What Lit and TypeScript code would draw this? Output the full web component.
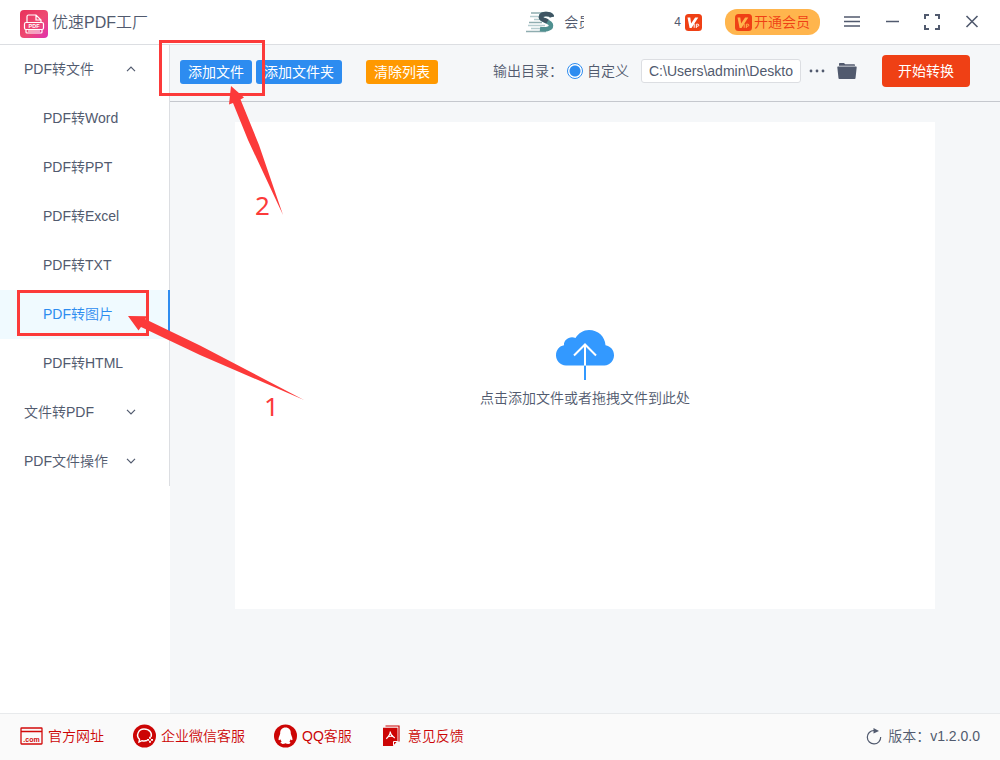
import { LitElement, html, css, svg, nothing } from "lit";
import { customElement, state } from "lit/decorators.js";

interface MenuGroup {
  title: string;
  items: string[];
}

const GROUPS: MenuGroup[] = [
  {
    title: "PDF转文件",
    items: ["PDF转Word", "PDF转PPT", "PDF转Excel", "PDF转TXT", "PDF转图片", "PDF转HTML"],
  },
  { title: "文件转PDF", items: [] },
  { title: "PDF文件操作", items: [] },
];

const logoIcon = html`<svg class="logo" width="28" height="28" viewBox="0 0 28 28" aria-hidden="true">
  <defs>
    <linearGradient id="lg" x1="0" y1="0" x2="1" y2="1">
      <stop offset="0" stop-color="#e8315a" />
      <stop offset="0.55" stop-color="#ee4a72" />
      <stop offset="1" stop-color="#e02fb0" />
    </linearGradient>
  </defs>
  <rect width="28" height="28" rx="4" fill="url(#lg)" />
  <path d="M7 12V6.500q0-1.500 1.500-1.500H16l5 5v2M16 5v5h5M6 19.500V22q0 1 1 1h14q1 0 1-1v-2.500M8 21h12" fill="none" stroke="#fff" stroke-width="1.200" />
  <rect x="4.500" y="12.500" width="19" height="7" rx="1.500" fill="none" stroke="#fff" stroke-width="1.200" />
  <text x="14" y="18.200" text-anchor="middle" font-size="5.500" font-weight="700" font-family="Liberation Sans, sans-serif" fill="#fff">PDF</text>
</svg>`;

const avatarIcon = html`<svg width="28" height="24" viewBox="0 0 28 24" aria-hidden="true">
  <path d="M5 3h12M3 12.500h13M0 21.500h20" stroke="#8fadb0" stroke-width="1.600" fill="none" />
  <path d="M4 6.500h10M8 9.500h7M2 15.500h17M5 18.500h12" stroke="#b5cccf" stroke-width="1.400" fill="none" />
  <path d="M26 7c-1-4-11.500-4.500-11 .5.300 3.500 10 3.500 10 8 0 4-6 4-11 3.500" fill="none" stroke="#4f9090" stroke-width="4.500" />
  <path d="M26 7c-1-4-11.500-4.500-11 .5.200 2 4 2.500 6.500 4" fill="none" stroke="#3f5563" stroke-width="4.500" />
</svg>`;

const vipIcon = (ink: string) => html`<svg width="17" height="17" viewBox="0 0 17 17" aria-hidden="true">
  <rect width="17" height="17" rx="3.500" fill="#ef4015" />
  <path d="M2.500 3.500h2.800l.8 6 4-6h3.200L6.500 14H4.600z" fill=${ink} />
  <path d="M9.200 9.700v4.100M11.300 14v-3.800h1.500q1 0 1 1t-1 1h-1.500" fill="none" stroke=${ink} stroke-width="1" />
</svg>`;

const chevron = (open: boolean) => html`<svg width="10" height="6" viewBox="0 0 10 6" aria-hidden="true">
  <path d=${open ? "M1 5.200l4-4 4 4" : "M1 .8l4 4 4-4"} fill="none" stroke="#515a6e" stroke-width="1.200" />
</svg>`;

const winIcon = (d: string, w = 2) => html`<svg width="16" height="16" viewBox="0 0 16 16" aria-hidden="true">
  <path d=${d} fill="none" stroke="#515a6e" stroke-width=${w} />
</svg>`;

const dotsIcon = html`<svg width="16" height="4" viewBox="0 0 16 4" aria-hidden="true" fill="#515a6e">
  <circle cx="2" cy="2" r="1.400" /><circle cx="8" cy="2" r="1.400" /><circle cx="14" cy="2" r="1.400" />
</svg>`;

const folderIcon = html`<svg width="20" height="18" viewBox="0 0 20 18" aria-hidden="true" fill="#515a6e">
  <path d="M2 3V1.800Q2 1 2.800 1H7l1.200 1.200h9q.8 0 .8.800v.8H2z" />
  <path d="M1 4.500h18q.8 0 .7.800l-1.200 10.900q-.1.800-.9.800H2.400q-.8 0-.9-.8L.3 5.300q-.1-.8.700-.8z" />
</svg>`;

const cloudIcon = html`<svg width="58" height="50" viewBox="0 0 58 50" aria-hidden="true">
  <path d="M10 35.500C4 35 0 30.500 0 25.200 0 20 3.500 15.800 8 15.200 7.500 10 13.500 5.500 19.500 8 22.500 3 27.500 0 33 0c9 0 16 6.500 16.500 15.200C54.500 16 58 20 58 25.200c0 5.500-4 9.800-9.500 10.300z" fill="#3399ff" />
  <path d="M29 35.500V50" stroke="#3399ff" stroke-width="2" />
  <path d="M29 35.500V15M18 25.500L29 14.500l11 11" fill="none" stroke="#fff" stroke-width="2" />
</svg>`;

const siteIcon = html`<svg width="23" height="18" viewBox="0 0 23 18" aria-hidden="true">
  <path d="M1.500 1h20q.5 0 .5.500v15q0 .5-.5.500h-20q-.5 0-.5-.5v-15q0-.5.500-.5zM1 4.500h21" fill="none" stroke="#d20a0a" stroke-width="1.300" />
  <text x="11.500" y="14.500" text-anchor="middle" font-size="7" font-weight="700" font-family="Liberation Sans, sans-serif" fill="#d20a0a">.com</text>
</svg>`;

const wechatIcon = html`<svg width="23" height="24" viewBox="0 0 23 24" aria-hidden="true">
  <circle cx="11.500" cy="12" r="11.500" fill="#cc0505" />
  <path d="M14 16.500q-2.500.8-5 .2L6 18l.5-2.700C2.500 11.500 5.500 5 11 5s8.500 4 7 8" fill="none" stroke="#fff" stroke-width="1.400" />
  <path d="M17 12.800v2M17 16.800v2M14 15.800h2M18 15.800h2" stroke="#fff" stroke-width="1.800" />
</svg>`;

const qqIcon = html`<svg width="23" height="24" viewBox="0 0 23 24" aria-hidden="true">
  <circle cx="11.500" cy="12" r="11.500" fill="#cc0505" />
  <path d="M11.500 3.500c-3.500 0-5.500 2.500-5.300 6-.2 1.500-1.700 3.500-1.700 6.300.4 1 1.300.2 1.800-.6.300 1 .8 1.800 1.400 2.400-1.800.7-1.400 2.400 1 2.400 1.200 0 2.200-.3 2.800-.8.600.5 1.600.8 2.800.8 2.400 0 2.800-1.700 1-2.400.600-.6 1.100-1.400 1.400-2.400.5.800 1.400 1.600 1.800.6 0-2.800-1.500-4.800-1.700-6.300.200-3.500-1.800-6-5.300-6z" fill="#fff" />
</svg>`;

const feedbackIcon = html`<svg width="19" height="22" viewBox="-2 0 19 22" aria-hidden="true">
  <path d="M2.500 1h13.500v15.500" fill="none" stroke="#cc0505" stroke-width="1.200" />
  <path d="M0 2.800h14.500v13.200l-4.700 5H0z" fill="#cc0505" />
  <path d="M10.500 20.500v-4h4" fill="none" stroke="#fff" stroke-width="1" />
  <path d="M7.300 6.500q0 3.500-4 7.300M7.300 6.500q0 3.500 4.500 6.500M4.500 12q3-1.300 6-.4" fill="none" stroke="#fff" stroke-width="1.200" />
</svg>`;

const refreshIcon = html`<svg width="16" height="17" viewBox="0 0 16 17" aria-hidden="true">
  <path d="M8 2.500A6.700 6.700 0 1 0 14.700 9" fill="none" stroke="#515a6e" stroke-width="1.200" />
  <path d="M7.500 0v5.600L13 3z" fill="#515a6e" />
</svg>`;

const marks = svg`
  <g fill="none" stroke="#fc3a3a" stroke-width="3">
    <rect x="160.500" y="41.500" width="103" height="53" />
    <rect x="18.500" y="291.500" width="129" height="43" />
  </g>
  <g fill="#fc3a3a">
    <path d="M231 86l13 11.500-3.500 2L259 145 283 215 248 140 233 103l-4 1.500z" />
    <path d="M128 316l18.500.3-1 3L200 345.500 304 400 200 355 141 327l-2.500 3.500z" />
    <text x="255" y="215" class="num">2</text>
    <text x="264" y="416" class="num">1</text>
  </g>`;

@customElement("app-root")
export class AppRoot extends LitElement {
  @state() private active = "PDF转图片";
  @state() private open = new Set([0]);

  static styles = css`
    :host {
      display: flex;
      flex-direction: column;
      position: relative;
      min-height: 100vh;
      overflow: hidden;
      background: #fff;
      color: #515a6e;
      font: 350 14px/20px "Liberation Sans", "Noto Sans CJK SC", sans-serif;
    }
    * { box-sizing: border-box; }
    svg { display: block; flex: none; }
    button {
      display: flex;
      align-items: center;
      justify-content: center;
      padding: 0;
      border: 0;
      background: none;
      color: inherit;
      font: inherit;
      white-space: nowrap;
      cursor: pointer;
    }
    .header {
      display: flex;
      align-items: center;
      height: 45px;
      padding: 0 8px 0 20px;
      border-bottom: 1px solid #dcdee2;
    }
    .logo { margin-top: 4px; }
    .title {
      margin: 0 auto 0 4px;
      padding-top: 2px;
      font-size: 16px;
      font-weight: inherit;
      line-height: 24px;
    }
    .user { display: flex; align-items: center; margin-right: 23px; }
    .name {
      width: 20px;
      margin: 0 90px 0 10px;
      overflow: hidden;
      white-space: nowrap;
    }
    .count { margin-right: 4px; font-size: 12px; }
    .pill {
      gap: 2px;
      height: 26px;
      margin-right: 12px;
      padding: 0 10px;
      border-radius: 12px;
      background: #ffb54d;
      color: #ef4015;
    }
    .win { width: 40px; height: 40px; }
    .body { display: flex; flex: 1; }
    .side { flex: none; width: 170px; }
    .menu { border-right: 1px solid #dcdee2; }
    .group, .item { width: 100%; height: 49px; }
    .group { justify-content: space-between; padding: 0 33px 2px 24px; }
    .item { justify-content: flex-start; padding: 0 0 2px 43px; }
    .item.active {
      width: 170px;
      border-right: 2px solid #2d8cf0;
      background: #f0faff;
      color: #2d8cf0;
    }
    .main {
      display: flex;
      flex: 1;
      flex-direction: column;
      min-width: 0;
      background: #f5f7f9;
    }
    .toolbar {
      display: flex;
      align-items: center;
      height: 57px;
      padding: 0 30px 4px 10px;
      border-bottom: 1px solid #c5c8ce;
    }
    .actions { display: flex; gap: 4px; padding-top: 2px; }
    .btn {
      height: 24px;
      padding: 0 8px;
      border-radius: 3px;
      background: #2d8cf0;
      color: #fff;
      font-weight: 400;
    }
    .btn.warn { margin-left: 20px; background: #ff9900; }
    .output { display: flex; align-items: center; margin-left: auto; white-space: nowrap; }
    .radio {
      appearance: none;
      width: 16px;
      height: 16px;
      margin: 0 4px;
      border: 1px solid #2d8cf0;
      border-radius: 50%;
      background: radial-gradient(circle, #2d8cf0 5px, #fff 6px);
    }
    .path {
      width: 160px;
      height: 24px;
      margin: 0 8px 0 12px;
      padding: 0 7px;
      border: 1px solid #dcdee2;
      border-radius: 3px;
      background: #fff;
      color: #515a6e;
      font: inherit;
    }
    .folder { margin: 0 25px 0 12px; }
    .start {
      height: 32px;
      padding: 0 16px;
      border-radius: 4px;
      background: #ef4015;
      color: #fff;
      font-weight: 400;
    }
    .stage { display: flex; flex: 1; padding: 20px 65px 104px; }
    .drop { flex: 1; flex-direction: column; gap: 8px; padding-top: 6px; background: #fff; }
    .footer {
      display: flex;
      align-items: center;
      gap: 29px;
      height: 47px;
      padding: 0 20px 2px;
      border-top: 1px solid #e8eaec;
      background: #fafafa;
    }
    .link {
      display: flex;
      align-items: center;
      gap: 5px;
      color: #cc0505;
      text-decoration: none;
    }
    .link:last-of-type { gap: 8px; }
    .version { display: flex; align-items: center; gap: 6px; margin-left: auto; }
    .marks { position: absolute; top: 0; left: 0; pointer-events: none; }
    .num { font: 26px "Noto Sans", sans-serif; }
  `;

  private toggle(i: number) {
    const next = new Set(this.open);
    if (!next.delete(i)) next.add(i);
    this.open = next;
  }

  render() {
    return html`
      <header class="header">
        ${logoIcon}
        <h1 class="title">优速PDF工厂</h1>
        <div class="user">
          ${avatarIcon}
          <span class="name">会员</span>
          <span class="count">4</span>
          ${vipIcon("#fff")}
        </div>
        <button class="pill">${vipIcon("#ffb54d")}开通会员</button>
        <button class="win" aria-label="菜单">${winIcon("M0 3h16M0 7.500h16M0 12h16", 1.5)}</button>
        <button class="win" aria-label="最小化">${winIcon("M2 7.500h13", 1.5)}</button>
        <button class="win" aria-label="最大化">${winIcon("M1 5V1h4M11 1h4v4M15 11v4h-4M5 15H1v-4")}</button>
        <button class="win" aria-label="关闭">${winIcon("M2.500 2l11 11M13.500 2l-11 11", 1.6)}</button>
      </header>
      <div class="body">
        <aside class="side">
          <nav class="menu">
            ${GROUPS.map(
              (g, i) => html`
                <button class="group" aria-expanded=${this.open.has(i)} @click=${() => this.toggle(i)}>
                  ${g.title}${chevron(this.open.has(i))}
                </button>
                ${this.open.has(i)
                  ? g.items.map(
                      (t) => html`<button class="item ${t === this.active ? "active" : ""}" @click=${() => (this.active = t)}>${t}</button>`
                    )
                  : nothing}
              `
            )}
          </nav>
        </aside>
        <main class="main">
          <div class="toolbar">
            <div class="actions">
              <button class="btn">添加文件</button>
              <button class="btn">添加文件夹</button>
              <button class="btn warn">清除列表</button>
            </div>
            <div class="output">
              <label for="path">输出目录：</label>
              <input class="radio" id="custom" type="radio" name="dir" checked />
              <label for="custom">自定义</label>
              <input class="path" id="path" type="text" value="C:\\Users\\admin\\Deskto" />
              <button aria-label="更多">${dotsIcon}</button>
              <button class="folder" aria-label="打开文件夹">${folderIcon}</button>
            </div>
            <button class="start">开始转换</button>
          </div>
          <div class="stage">
            <button class="drop">${cloudIcon}<span>点击添加文件或者拖拽文件到此处</span></button>
          </div>
        </main>
      </div>
      <footer class="footer">
        <a class="link" href="#site">${siteIcon}官方网址</a>
        <a class="link" href="#wechat">${wechatIcon}企业微信客服</a>
        <a class="link" href="#qq">${qqIcon}QQ客服</a>
        <a class="link" href="#feedback">${feedbackIcon}意见反馈</a>
        <div class="version">${refreshIcon}<span>版本：v1.2.0.0</span></div>
      </footer>
      <svg class="marks" width="320" height="430" viewBox="0 0 320 430" aria-hidden="true">${marks}</svg>
    `;
  }
}
